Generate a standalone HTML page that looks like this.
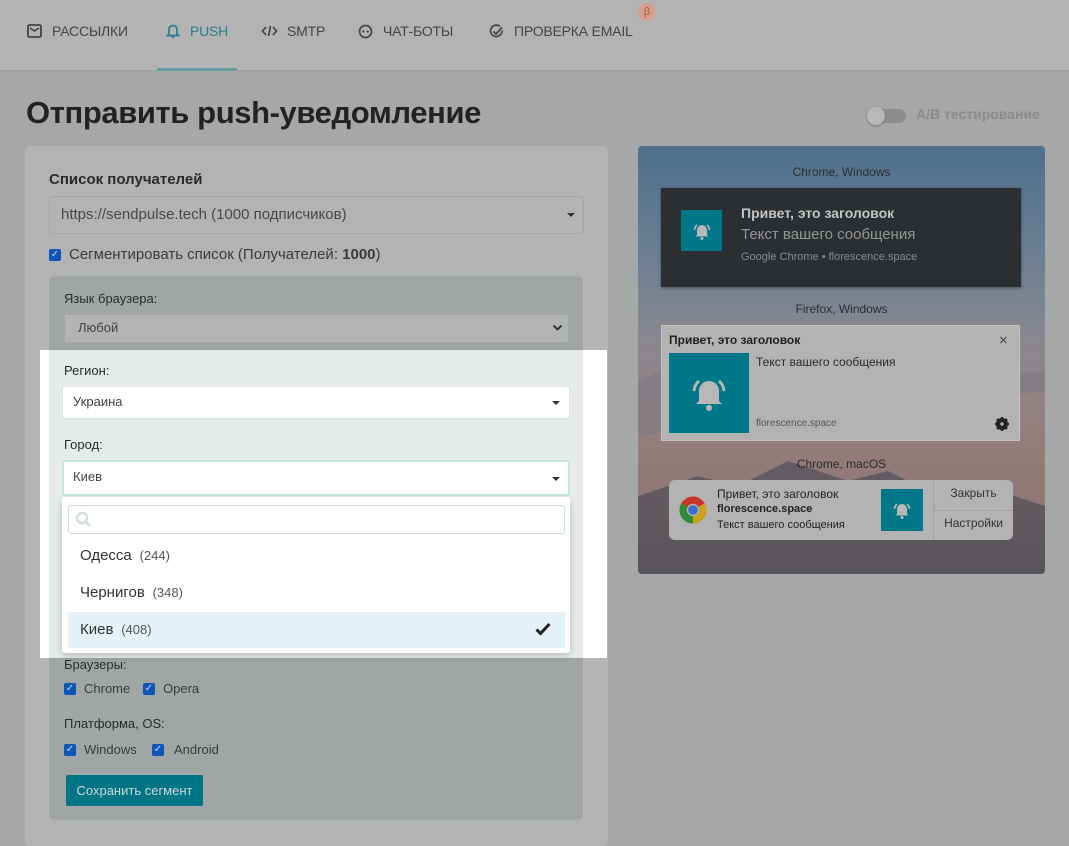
<!DOCTYPE html>
<html><head><meta charset="utf-8"><style>
*{box-sizing:border-box;margin:0;padding:0}
body{width:1069px;height:832px;overflow:hidden;background:#a6a8a7;font-family:"Liberation Sans","DejaVu Sans",sans-serif;color:#2a2a2a;position:relative}
.a{position:absolute;white-space:nowrap}
.hdr{left:0;top:0;width:1069px;height:71px;background:#b3b3b3;border-bottom:1px solid #a0a0a0}
.nav{top:23px;font-size:14px;color:#444;letter-spacing:-.2px}
.cb{width:12px;height:12px;background:#0d56b8;border-radius:2px;color:#cfd8e8;font-size:10px;line-height:12px;text-align:center}
.sel{border:1px solid #c9c9c9;border-radius:3px;background:#fff}
.caret{width:0;height:0;border-left:4px solid transparent;border-right:4px solid transparent;border-top:4px solid #333}
.bell{background:#00788a;display:flex;align-items:center;justify-content:center}
</style></head><body>
<div class="a hdr"></div>
<svg class="a" style="left:27px;top:24px" width="15" height="14" viewBox="0 0 15 14"><rect x="1" y="1" width="13" height="12" rx="1.5" fill="none" stroke="#444" stroke-width="1.8"/><path d="M3 4l4.5 3 4.5-3" fill="none" stroke="#444" stroke-width="1.6"/></svg>
<div class="a nav" style="left:52px">РАССЫЛКИ</div>
<svg class="a" style="left:166px;top:23px" width="14" height="16" viewBox="0 0 14 16"><path d="M3 11V6.5a4 4 0 018 0V11l1.5 1.5h-11z" fill="none" stroke="#2a7d8c" stroke-width="1.8"/><path d="M5.5 14h3" stroke="#2a7d8c" stroke-width="1.8"/></svg>
<div class="a nav" style="left:190px;color:#2a7d8c">PUSH</div>
<div class="a" style="left:157px;top:68px;width:80px;height:3px;background:#6a9aa2"></div>
<svg class="a" style="left:261px;top:24px" width="17" height="14" viewBox="0 0 17 14"><path d="M5 3L1.5 7 5 11M12 3l3.5 4-3.5 4M9.5 2l-2 10" fill="none" stroke="#444" stroke-width="1.7"/></svg>
<div class="a nav" style="left:287px">SMTP</div>
<svg class="a" style="left:358px;top:24px" width="15" height="15" viewBox="0 0 15 15"><path d="M7.5 1.5a6 6 0 106 6 6 6 0 00-6-6z" fill="none" stroke="#444" stroke-width="1.7"/><circle cx="5.3" cy="7.5" r="1.1" fill="#444"/><circle cx="9.7" cy="7.5" r="1.1" fill="#444"/></svg>
<div class="a nav" style="left:383px">ЧАТ-БОТЫ</div>
<svg class="a" style="left:489px;top:24px" width="15" height="15" viewBox="0 0 15 15"><path d="M13 6.5a5.7 5.7 0 11-2-4" fill="none" stroke="#444" stroke-width="1.7"/><path d="M4.5 7.5l2.5 2.5 6-6.5" fill="none" stroke="#444" stroke-width="1.8"/></svg>
<div class="a nav" style="left:514px">ПРОВЕРКА EMAIL</div>
<div class="a" style="left:638px;top:3px;width:18px;height:18px;border-radius:50%;background:#d4a190;color:#b5503c;font-size:11px;text-align:center;line-height:18px">β</div>

<div class="a" style="left:26px;top:95px;font-size:31px;font-weight:600;color:#222;letter-spacing:-.4px">Отправить push-уведомление</div>
<div class="a" style="left:868px;top:109px;width:38px;height:14px;border-radius:7px;background:#8d8d8d"></div>
<div class="a" style="left:867px;top:107px;width:18px;height:18px;border-radius:50%;background:#b8b8b8;box-shadow:0 1px 2px rgba(0,0,0,.3)"></div>
<div class="a" style="left:916px;top:106px;font-size:14px;font-weight:bold;color:#8a8a8a">A/B тестирование</div>

<div class="a" style="left:25px;top:146px;width:583px;height:700px;background:#b3b3b3;border-radius:6px"></div>
<div class="a" style="left:49px;top:171px;font-size:15px;font-weight:bold;color:#2a2a2a">Список получателей</div>
<div class="a" style="left:49px;top:196px;width:535px;height:38px;border:1px solid #a5a5a5;border-radius:3px;background:#b3b3b3"></div>
<div class="a" style="left:61px;top:206px;font-size:15px;color:#484848">https://sendpulse.tech (1000 подписчиков)</div>
<div class="a caret" style="left:567px;top:213px"></div>
<div class="a cb" style="left:49px;top:249px">✓</div>
<div class="a" style="left:69px;top:246px;font-size:15px;color:#3a3a3a">Сегментировать список (Получателей: <b>1000</b>)</div>

<div class="a" style="left:49px;top:276px;width:534px;height:544px;background:#a0a6a5;border-radius:6px"></div>
<div class="a" style="left:64px;top:291px;font-size:13px;color:#2a2a2a">Язык браузера:</div>
<div class="a" style="left:64px;top:314px;width:505px;height:29px;border:1px solid #a5a5a5;border-radius:3px;background:#b3b3b3"></div>
<div class="a" style="left:78px;top:320px;font-size:13px;color:#444">Любой</div>
<svg class="a" style="left:552px;top:324px" width="11" height="8" viewBox="0 0 11 8"><path d="M1.5 1.5l4 4 4-4" fill="none" stroke="#333" stroke-width="2"/></svg>

<div class="a" style="left:40px;top:350px;width:567px;height:308px;background:#fff"></div>
<div class="a" style="left:49px;top:350px;width:534px;height:308px;background:#e6ebea"></div>
<div class="a" style="left:64px;top:363px;font-size:13px;color:#2a2a2a">Регион:</div>
<div class="a sel" style="left:62px;top:386px;width:508px;height:33px;border-color:#dde3e2"></div>
<div class="a" style="left:73px;top:394px;font-size:13px;color:#444">Украина</div>
<div class="a caret" style="left:552px;top:401px"></div>
<div class="a" style="left:64px;top:437px;font-size:13px;color:#2a2a2a">Город:</div>
<div class="a sel" style="left:62px;top:460px;width:508px;height:36px;border:2px solid #c5e6d6"></div>
<div class="a" style="left:73px;top:469px;font-size:13px;color:#444">Киев</div>
<div class="a caret" style="left:552px;top:477px"></div>
<div class="a" style="left:62px;top:497px;width:508px;height:156px;background:#fff;border-radius:3px;box-shadow:0 3px 8px rgba(0,0,0,.18)"></div>
<div class="a" style="left:68px;top:505px;width:497px;height:29px;border:1px solid #cfdedd;border-radius:3px"></div>
<svg class="a" style="left:75px;top:511px" width="17" height="17" viewBox="0 0 17 17"><circle cx="7" cy="7" r="5" fill="none" stroke="#d3dfe0" stroke-width="2.4"/><path d="M10.5 10.5l4.5 4.5" stroke="#d3dfe0" stroke-width="3"/></svg>
<div class="a" style="left:80px;top:547px;font-size:15px;color:#333">Одесса <span style="font-size:13px;color:#555">&nbsp;(244)</span></div>
<div class="a" style="left:80px;top:584px;font-size:15px;color:#333">Чернигов <span style="font-size:13px;color:#555">&nbsp;(348)</span></div>
<div class="a" style="left:68px;top:612px;width:497px;height:36px;background:#e4f2f8;border-radius:2px"></div>
<div class="a" style="left:80px;top:621px;font-size:15px;color:#333">Киев <span style="font-size:13px;color:#555">&nbsp;(408)</span></div>
<svg class="a" style="left:535px;top:622px" width="16" height="14" viewBox="0 0 16 14"><path d="M1.5 7.5l4 4 9-9.5" fill="none" stroke="#222" stroke-width="3"/></svg>

<div class="a" style="left:64px;top:657px;font-size:13px;color:#2a2a2a">Браузеры:</div>
<div class="a cb" style="left:64px;top:683px">✓</div><div class="a" style="left:84px;top:681px;font-size:13px;color:#3a3a3a">Chrome</div>
<div class="a cb" style="left:143px;top:683px">✓</div><div class="a" style="left:163px;top:681px;font-size:13px;color:#3a3a3a">Opera</div>
<div class="a" style="left:64px;top:716px;font-size:13px;color:#2a2a2a">Платформа, OS:</div>
<div class="a cb" style="left:64px;top:744px">✓</div><div class="a" style="left:84px;top:742px;font-size:13px;color:#3a3a3a">Windows</div>
<div class="a cb" style="left:152px;top:744px">✓</div><div class="a" style="left:174px;top:742px;font-size:13px;color:#3a3a3a">Android</div>
<div class="a" style="left:66px;top:775px;width:137px;height:31px;background:#007586;border-radius:2px;color:#cdd8da;font-size:13px;text-align:center;line-height:31px">Сохранить сегмент</div>

<div class="a" style="left:638px;top:146px;width:407px;height:428px;border-radius:4px;overflow:hidden;background:linear-gradient(180deg,#4f6f8c 0%,#6b7f92 25%,#8a8790 45%,#94807f 65%,#8e7674 85%,#6f6262 100%)">
<svg width="407" height="428" style="position:absolute;left:0;top:0"><path d="M0 235l40-20 50 5 60-30 50 25 60-20 50 10 50 25 47-5v20L0 290z" fill="#7d7a82" opacity=".6"/><path d="M0 350l60-20 40 10 50-25 60 20 40-10 60 30 50-10 47 15v68H0z" fill="#4f4e57" opacity=".7"/></svg>
</div>
<div class="a" style="left:638px;top:165px;width:407px;text-align:center;font-size:12px;color:#2a2f36">Chrome, Windows</div>
<div class="a" style="left:661px;top:188px;width:360px;height:99px;background:#2c2f31;box-shadow:0 1px 3px rgba(0,0,0,.4)"></div>
<div class="a bell" style="left:681px;top:210px;width:41px;height:41px"><svg width="22" height="20" viewBox="0 0 22 20"><path d="M6 14V9a5 5 0 0110 0v5l1.5 1.5h-13z" fill="#b8b8b8"/><circle cx="11" cy="17.5" r="1.5" fill="#b8b8b8"/><path d="M3.5 9a7 7 0 012.5-5M18.5 9a7 7 0 00-2.5-5" fill="none" stroke="#b8b8b8" stroke-width="1.6"/></svg></div>
<div class="a" style="left:741px;top:205px;font-size:14px;font-weight:bold;color:#c4c4c4">Привет, это заголовок</div>
<div class="a" style="left:741px;top:226px;font-size:15px;color:#959595">Текст вашего сообщения</div>
<div class="a" style="left:741px;top:251px;font-size:11px;color:#8a8a8a">Google Chrome • florescence.space</div>

<div class="a" style="left:638px;top:302px;width:407px;text-align:center;font-size:12px;color:#2a2a30">Firefox, Windows</div>
<div class="a" style="left:661px;top:325px;width:359px;height:116px;background:#b3b3b3;border:1px solid #c2c2c2"></div>
<div class="a" style="left:669px;top:333px;font-size:12px;font-weight:bold;color:#1f1f1f">Привет, это заголовок</div>
<div class="a" style="left:999px;top:332px;font-size:15px;color:#444">×</div>
<div class="a bell" style="left:669px;top:353px;width:80px;height:80px"><svg width="44" height="40" viewBox="0 0 22 20"><path d="M6 14V9a5 5 0 0110 0v5l1.5 1.5h-13z" fill="#b8b8b8"/><circle cx="11" cy="17.5" r="1.5" fill="#b8b8b8"/><path d="M3.5 9a7 7 0 012.5-5M18.5 9a7 7 0 00-2.5-5" fill="none" stroke="#b8b8b8" stroke-width="1.4"/></svg></div>
<div class="a" style="left:756px;top:355px;font-size:12px;color:#2a2a2a">Текст вашего сообщения</div>
<div class="a" style="left:756px;top:418px;font-size:10px;color:#555">florescence.space</div>
<svg class="a" style="left:995px;top:417px" width="14" height="14" viewBox="0 0 14 14"><circle cx="7" cy="7" r="4.5" fill="none" stroke="#222" stroke-width="3"/><path d="M7 0v14M0 7h14M2 2l10 10M12 2L2 12" stroke="#222" stroke-width="2.4"/><circle cx="7" cy="7" r="1.7" fill="#b3b3b3"/></svg>

<div class="a" style="left:638px;top:457px;width:407px;text-align:center;font-size:12px;color:#2a2a30">Chrome, macOS</div>
<div class="a" style="left:669px;top:480px;width:344px;height:60px;background:#b3b3b3;border-radius:6px"></div>
<svg class="a" style="left:679px;top:496px" width="28" height="28" viewBox="0 0 28 28"><circle cx="14" cy="14" r="13.5" fill="#c8352b"/><path d="M14 14L2.3 20.7A13.5 13.5 0 0014 27.5z" fill="#2e8b3a"/><path d="M14 14L2.3 20.7A13.5 13.5 0 010.5 14 13.5 13.5 0 012.3 7.3z" fill="#2e8b3a"/><path d="M14 14l11.7 6.7A13.5 13.5 0 0114 27.5z" fill="#c9a21e"/><path d="M14 14l11.7-6.7A13.5 13.5 0 0127.5 14a13.5 13.5 0 01-1.8 6.7z" fill="#c9a21e"/><circle cx="14" cy="14" r="6.2" fill="#b3b3b3"/><circle cx="14" cy="14" r="4.8" fill="#3a6fc8"/></svg>
<div class="a" style="left:717px;top:487px;font-size:12px;color:#222">Привет, это заголовок</div>
<div class="a" style="left:717px;top:503px;font-size:11px;font-weight:bold;color:#222">florescence.space</div>
<div class="a" style="left:717px;top:519px;font-size:11px;color:#222">Текст вашего сообщения</div>
<div class="a bell" style="left:881px;top:489px;width:42px;height:42px"><svg width="22" height="20" viewBox="0 0 22 20"><path d="M6 14V9a5 5 0 0110 0v5l1.5 1.5h-13z" fill="#b8b8b8"/><circle cx="11" cy="17.5" r="1.5" fill="#b8b8b8"/><path d="M3.5 9a7 7 0 012.5-5M18.5 9a7 7 0 00-2.5-5" fill="none" stroke="#b8b8b8" stroke-width="1.6"/></svg></div>
<div class="a" style="left:933px;top:480px;width:1px;height:60px;background:#a0a0a0"></div>
<div class="a" style="left:934px;top:510px;width:79px;height:1px;background:#a0a0a0"></div>
<div class="a" style="left:934px;top:486px;width:79px;text-align:center;font-size:12px;color:#333">Закрыть</div>
<div class="a" style="left:934px;top:516px;width:79px;text-align:center;font-size:12px;color:#333">Настройки</div>
</body></html>
